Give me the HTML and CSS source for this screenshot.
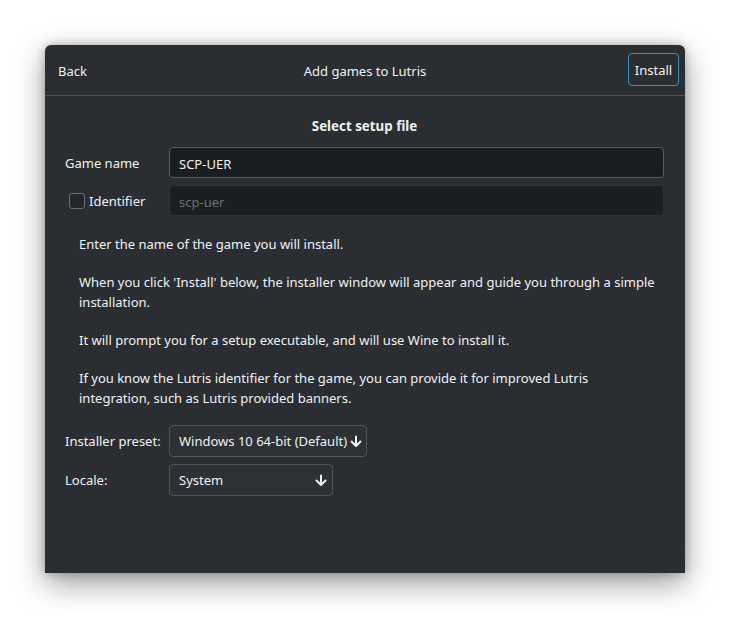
FILE: index.html
```html
<!DOCTYPE html>
<html lang="en">
<head>
<meta charset="utf-8">
<title>Add games to Lutris</title>
<link rel="stylesheet" href="styles.css">
</head>
<body>
<div class="window">
  <header class="headerbar">
    <span class="back">Back</span>
    <span class="title">Add games to Lutris</span>
    <span class="install-btn">Install</span>
  </header>
  <main class="content">
    <h1 class="section-title">Select setup file</h1>
    <div class="form">
      <label class="label">Game name</label>
      <div class="entry">SCP-UER</div>
      <label class="label check-label"><span class="checkbox"></span>Identifier</label>
      <div class="entry disabled">scp-uer</div>
    </div>
    <div class="description">
      <p>Enter the name of the game you will install.</p>
      <p>When you click 'Install' below, the installer window will appear and guide you through a simple installation.</p>
      <p>It will prompt you for a setup executable, and will use Wine to install it.</p>
      <p>If you know the Lutris identifier for the game, you can provide it for improved Lutris integration, such as Lutris provided banners.</p>
    </div>
    <div class="form options">
      <label class="label">Installer preset:</label>
      <div class="combo"><span class="combo-text">Windows 10 64-bit (Default)</span><svg class="arrow" width="12" height="13" viewBox="0 0 12 13"><path d="M6 1.5V11M1.5 6.5L6 11L10.5 6.5" fill="none" stroke="#eff0f1" stroke-width="2" stroke-linecap="round" stroke-linejoin="round"/></svg></div>
      <label class="label">Locale:</label>
      <div class="combo locale"><span class="combo-text">System</span><svg class="arrow" width="12" height="13" viewBox="0 0 12 13"><path d="M6 1.5V11M1.5 6.5L6 11L10.5 6.5" fill="none" stroke="#eff0f1" stroke-width="2" stroke-linecap="round" stroke-linejoin="round"/></svg></div>
    </div>
  </main>
</div>
</body>
</html>
```

FILE: styles.css
```css
* { box-sizing: border-box; }
html, body { margin: 0; padding: 0; background: #ffffff; }
html, body { height: 618px; overflow: hidden; }
body {
  padding: 45px 45px 0 45px;
  font-family: "Noto Sans", "Open Sans", sans-serif;
  font-size: 13px;
  color: #eff0f1;
}
.window {
  width: 640px;
  height: 528px;
  background: #2a2e32;
  border-radius: 6px 6px 0 0;
  box-shadow: 0 10px 30px rgba(0, 0, 0, 0.4), 0 0 8px rgba(0, 0, 0, 0.25);
  display: flex;
  flex-direction: column;
}
.headerbar {
  height: 51px;
  border-bottom: 1px solid #4e5256;
  display: flex;
  align-items: center;
  padding: 0 6px 1px 13px;
  position: relative;
}
.back { flex: 1; padding-top: 2px; }
.install-btn {
  flex: 0 0 auto;
  width: 51px;
  height: 33px;
  border: 1px solid #3b8fbb;
  border-radius: 4px;
  display: flex;
  align-items: center;
  justify-content: center;
  margin-left: auto;
  padding-top: 1px;
}
.headerbar .title {
  position: absolute;
  left: 0;
  right: 0;
  top: 0;
  bottom: 0;
  padding-top: 2px;
  display: flex;
  align-items: center;
  justify-content: center;
  pointer-events: none;
}
.content {
  padding: 20px 21px 0 20px;
}
.section-title {
  margin: 0;
  font-size: 13.33px;
  font-weight: bold;
  line-height: 20px;
  text-align: center;
}
.form {
  display: grid;
  grid-template-columns: 104px 1fr;
  row-gap: 7px;
  align-items: center;
  margin-top: 11px;
}
.label { line-height: 19px; padding-top: 2px; }
.check-label {
  display: flex;
  align-items: center;
  padding-left: 4px;
}
.checkbox {
  width: 16px;
  height: 16px;
  border: 1px solid #6a6e72;
  border-radius: 3px;
  background: #24272a;
  margin-right: 4px;
  margin-top: -1px;
}
.entry {
  height: 31px;
  background: #1b1e20;
  border: 1px solid #585c60;
  border-radius: 4px;
  padding: 2px 9px 0 9px;
  display: flex;
  align-items: center;
}
.entry.disabled {
  border-color: #2c3034;
  color: #6b6e71;
}
.description {
  padding: 19px 5px 0 14px;
  line-height: 19.2px;
}
.description p { margin: 0 0 19.2px 0; }
.description p:last-child { margin-bottom: 0; }
.options {
  margin-top: 17px;
  justify-items: start;
}
.combo {
  height: 32px;
  width: 198px;
  background: #2d3135;
  border: 1px solid #50555a;
  border-radius: 4px;
  padding: 1px 4px 0 9px;
  display: flex;
  align-items: center;
  justify-content: space-between;
  white-space: nowrap;
}
.combo.locale { width: 164px; padding-right: 5px; }
.arrow { flex: 0 0 auto; }
```
